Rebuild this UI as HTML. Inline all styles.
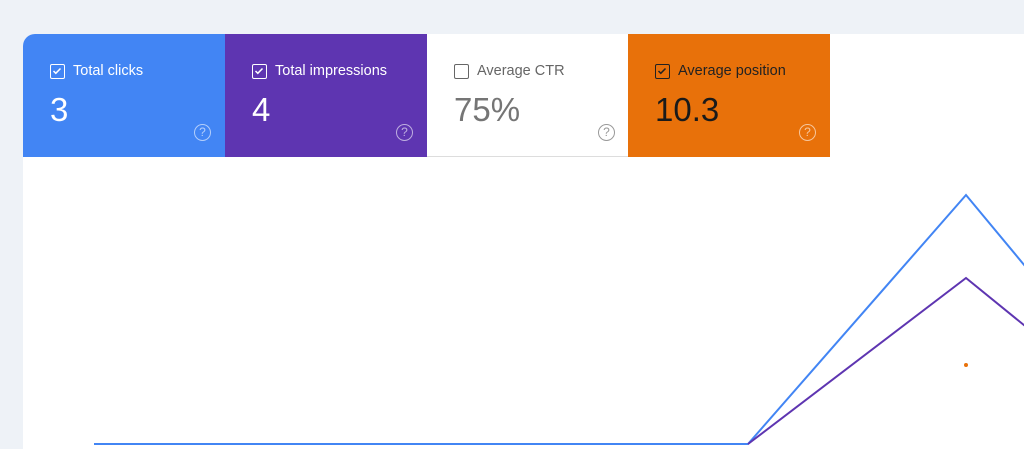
<!DOCTYPE html>
<html><head><style>
body{margin:0;width:1024px;height:449px;background:#eef2f7;overflow:hidden;position:relative;font-family:"Liberation Sans",Roboto,sans-serif}
.panel{position:absolute;left:23px;top:34px;width:1001px;height:415px;background:#fff;border-top-left-radius:12px;overflow:hidden}
.tile{position:absolute;top:0;height:123px;width:202px}
.lbl{position:absolute;left:27px;top:29px;font-size:14.5px;display:flex;align-items:center}
.cb{border:1.5px solid;border-radius:2px;margin-right:8px;position:relative;box-sizing:border-box;width:15px;height:15px}
.cb svg{position:absolute;left:0;top:0}
.val{position:absolute;left:27px;top:57px;font-size:33px}
.q{position:absolute;right:14px;top:90px;width:15px;height:15px;border:1.5px solid;border-radius:50%;font-size:12px;text-align:center;line-height:15px}
</style></head><body>
<div class="panel">
 <div class="tile" style="left:0;background:#4285f4;color:#fff">
  <div class="lbl"><div class="cb" style="border-color:#fff"><svg width="12" height="12" viewBox="0 0 12 12"><path d="M2.5 6l2.3 2.3L9.5 3.5" stroke="#fff" stroke-width="1.5" fill="none"/></svg></div>Total clicks</div>
  <div class="val">3</div><div class="q" style="border-color:rgba(255,255,255,.6);color:rgba(255,255,255,.6)">?</div>
 </div>
 <div class="tile" style="left:202px;background:#5e35b1;color:#fff">
  <div class="lbl"><div class="cb" style="border-color:#fff"><svg width="12" height="12" viewBox="0 0 12 12"><path d="M2.5 6l2.3 2.3L9.5 3.5" stroke="#fff" stroke-width="1.5" fill="none"/></svg></div>Total impressions</div>
  <div class="val">4</div><div class="q" style="border-color:rgba(255,255,255,.6);color:rgba(255,255,255,.6)">?</div>
 </div>
 <div class="tile" style="left:404px;width:201px;background:#fff;color:#666;border-bottom:1px solid #ddd;box-sizing:border-box">
  <div class="lbl"><div class="cb" style="border-color:#666"></div>Average CTR</div>
  <div class="val" style="color:#757575">75%</div><div class="q" style="border-color:#999;color:#999;right:13px">?</div>
 </div>
 <div class="tile" style="left:605px;background:#e8710a;color:#222">
  <div class="lbl"><div class="cb" style="border-color:#222"><svg width="12" height="12" viewBox="0 0 12 12"><path d="M2.5 6l2.3 2.3L9.5 3.5" stroke="#222" stroke-width="1.5" fill="none"/></svg></div>Average position</div>
  <div class="val" style="color:#1a1a1a">10.3</div><div class="q" style="border-color:rgba(255,255,255,.6);color:rgba(255,255,255,.6)">?</div>
 </div>
</div>
<svg style="position:absolute;left:0;top:0" width="1024" height="449">
 <polyline points="94,444 748,444 966,195 1030,272" fill="none" stroke="#4285f4" stroke-width="2"/>
 <polyline points="748,444 966,278 1030,330" fill="none" stroke="#5e35b1" stroke-width="2"/>
 <circle cx="966" cy="365" r="2" fill="#e8710a"/>
</svg>
</body></html>
